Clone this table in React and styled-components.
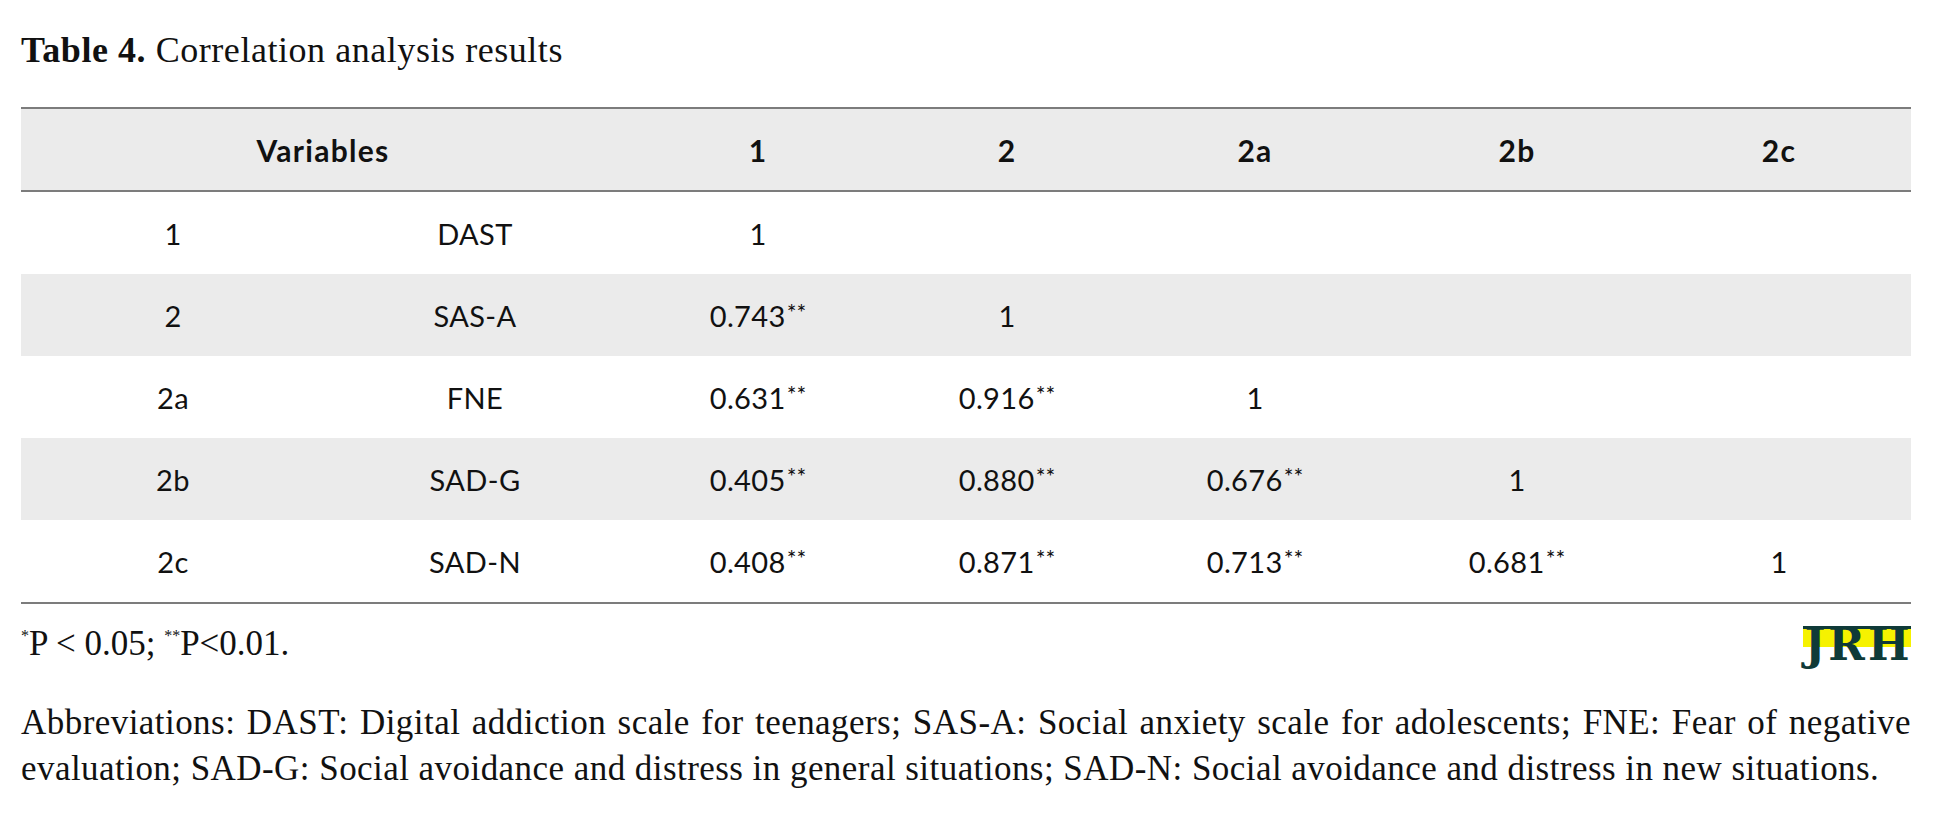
import styled, { createGlobalStyle } from 'styled-components';

const GlobalStyle = createGlobalStyle`
  html, body {
    margin: 0;
    padding: 0;
    background: #ffffff;
  }
`;

const columns = '304px 300px 266px 232px 264px 260px 264px';

const headers = ['1', '2', '2a', '2b', '2c'];

const rows = [
  { id: '1', name: 'DAST', values: ['1'] },
  { id: '2', name: 'SAS-A', values: ['0.743**', '1'] },
  { id: '2a', name: 'FNE', values: ['0.631**', '0.916**', '1'] },
  { id: '2b', name: 'SAD-G', values: ['0.405**', '0.880**', '0.676**', '1'] },
  { id: '2c', name: 'SAD-N', values: ['0.408**', '0.871**', '0.713**', '0.681**', '1'] },
];

const Page = styled.div`
  width: 1890px;
  padding: 30px 25px 40px 21px;
  font-family: 'Liberation Serif', 'Times New Roman', serif;
  color: #111;
`;

const Caption = styled.div`
  font-size: 36px;
  line-height: 40px;
  letter-spacing: 0.55px;
  margin-bottom: 37px;

  b {
    font-weight: 700;
  }
`;

const Table = styled.div`
  border-top: 2px solid #7c7c7c;
  border-bottom: 2px solid #7c7c7c;
  font-family: Lato, 'Open Sans', sans-serif;
  color: #111;
`;

const Row = styled.div`
  display: grid;
  grid-template-columns: ${columns};
  height: ${({ $head }) => ($head ? '81px' : '82px')};
  background: ${({ $shaded }) => ($shaded ? '#ebebeb' : '#ffffff')};
  border-bottom: ${({ $head }) => ($head ? '2px solid #7c7c7c' : 'none')};
  font-weight: ${({ $head }) => ($head ? 700 : 400)};
  font-size: ${({ $head }) => ($head ? '30px' : '29px')};
  letter-spacing: ${({ $head }) => ($head ? '1.3px' : '0.4px')};
`;

const Cell = styled.div`
  display: flex;
  align-items: center;
  justify-content: center;
  grid-column: ${({ $span }) => ($span ? `span ${$span}` : 'auto')};
`;

const Stars = styled.sup`
  font-size: 23px;
  line-height: 0;
  position: relative;
  top: -3px;
  vertical-align: super;
  letter-spacing: 0;
  margin-left: 1px;
`;

const Footnote = styled.div`
  display: flex;
  justify-content: space-between;
  align-items: center;
  margin-top: 20px;
  font-size: 35px;
  line-height: 40px;
`;

const Note = styled.span`
  sup {
    font-size: 16px;
    vertical-align: top;
    line-height: 1;
    position: relative;
    top: 4px;
  }
`;

const Logo = styled.div`
  width: 108px;
  height: 37px;
  display: flex;
  justify-content: center;
  background: linear-gradient(
    to bottom,
    #0f3a38 0,
    #0f3a38 9%,
    #f6f200 9%,
    #f6f200 56%,
    #ffffff 56%
  );
  font-family: 'DejaVu Serif', 'Liberation Serif', serif;
  font-weight: 700;
  font-size: 44px;
  line-height: 37px;
  letter-spacing: 3px;
  text-indent: 3px;
  color: #0f3a38;
`;

const Abbrev = styled.div`
  margin-top: 36px;
  font-size: 35px;
  line-height: 46px;
  letter-spacing: 0.45px;
`;

const Line = styled.div`
  text-align: ${({ $justify }) => ($justify ? 'justify' : 'left')};
  text-align-last: ${({ $justify }) => ($justify ? 'justify' : 'left')};
  white-space: nowrap;
`;

function Value({ text }) {
  if (!text) return <Cell />;
  const stars = text.endsWith('**');
  return (
    <Cell>
      {stars ? text.slice(0, -2) : text}
      {stars && <Stars>**</Stars>}
    </Cell>
  );
}

export default function App() {
  return (
    <Page>
      <GlobalStyle />
      <Caption>
        <b>Table 4.</b> Correlation analysis results
      </Caption>

      <Table>
        <Row $head $shaded>
          <Cell $span={2}>Variables</Cell>
          {headers.map((h) => (
            <Cell key={h}>{h}</Cell>
          ))}
        </Row>
        {rows.map((r, i) => (
          <Row key={r.id} $shaded={i % 2 === 1}>
            <Cell>{r.id}</Cell>
            <Cell>{r.name}</Cell>
            {headers.map((h, j) => (
              <Value key={h} text={r.values[j]} />
            ))}
          </Row>
        ))}
      </Table>

      <Footnote>
        <Note>
          <sup>*</sup>P &lt; 0.05; <sup>**</sup>P&lt;0.01.
        </Note>
        <Logo>JRH</Logo>
      </Footnote>

      <Abbrev>
        <Line $justify>
          Abbreviations: DAST: Digital addiction scale for teenagers; SAS-A: Social anxiety scale for adolescents; FNE: Fear of negative
        </Line>
        <Line>
          evaluation; SAD-G: Social avoidance and distress in general situations; SAD-N: Social avoidance and distress in new situations.
        </Line>
      </Abbrev>
    </Page>
  );
}
